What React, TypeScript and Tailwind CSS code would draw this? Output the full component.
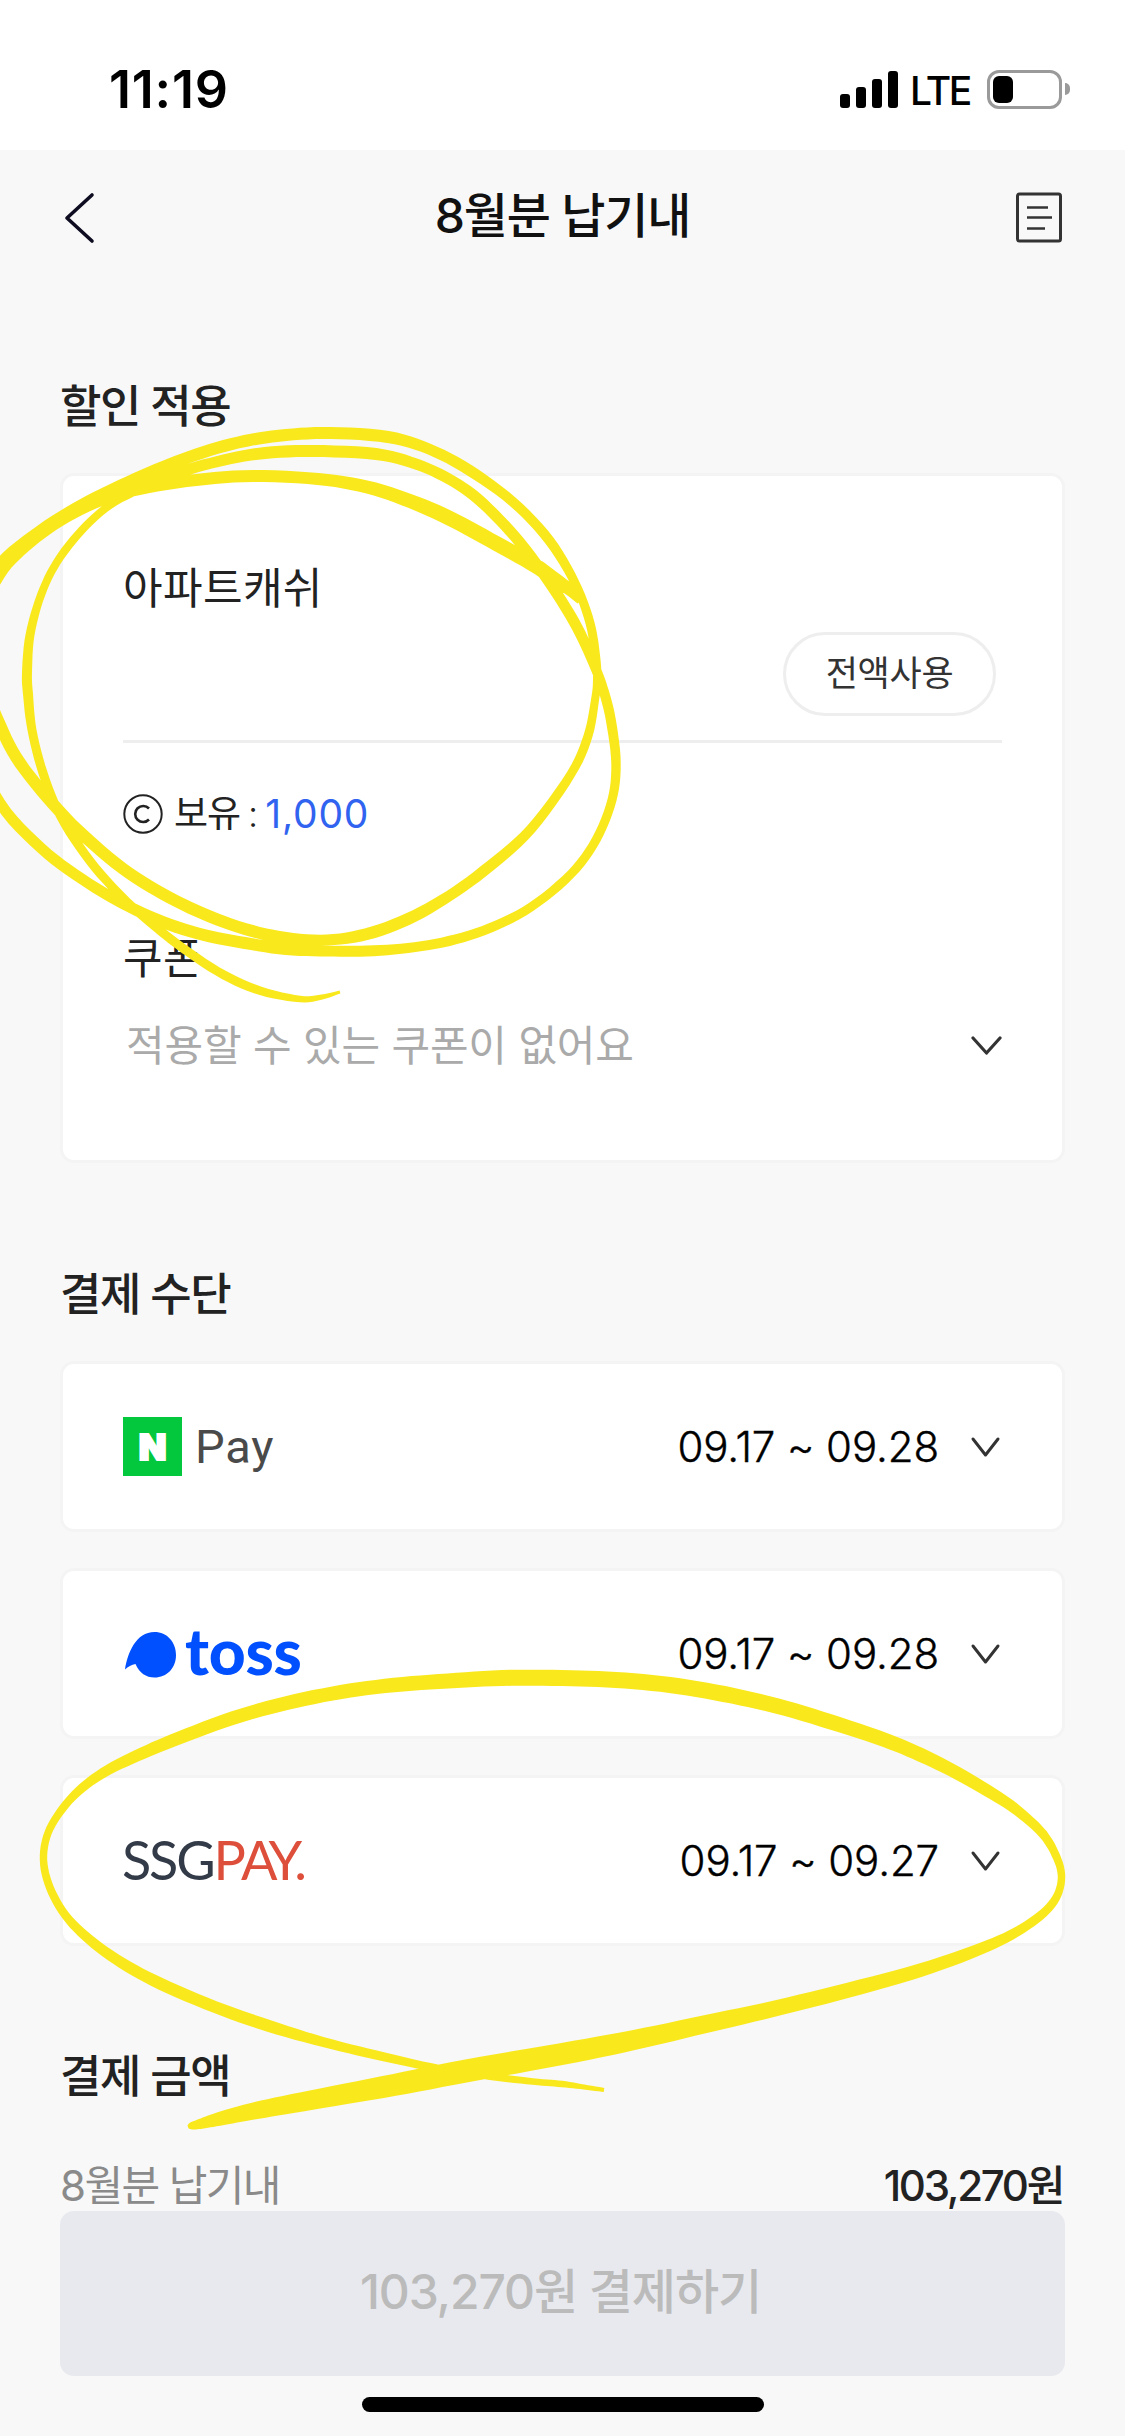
import type { ReactNode } from "react";

type Sample = [x: number, y: number, width: number];

/* Highlighter strokes: centre line samples with the pen width at each one. */
const CASH_LOOP: Sample[] = [
  [581, 600, 10], [570, 590, 12], [553, 578, 14], [531, 563, 15], [490, 540, 15], [449, 518, 15], [410, 501, 14], [367, 487, 13],
  [318, 479, 12], [253, 476, 12], [196, 480, 12], [139, 489, 12], [100, 501, 11], [60, 521, 11], [25, 547, 11],
  [0, 575, 10], [-20, 620, 10], [-20, 670, 11], [0, 725, 12], [20, 763, 12], [53, 804, 12], [82, 834, 12],
  [122, 868, 12], [163, 894, 12], [204, 914, 12], [245, 929, 12], [286, 938, 12], [327, 940, 11], [367, 934, 12],
  [408, 919, 12], [449, 896, 11], [490, 866, 11], [531, 829, 10], [571, 774, 9], [588, 736, 9], [595, 700, 8],
  [597, 680, 8], [596, 660, 9], [590, 623, 9], [575, 583, 9], [549, 540, 10], [513, 502, 10], [469, 470, 11],
  [429, 449, 11], [388, 437, 12], [331, 433, 12], [286, 435, 12], [245, 441, 12], [204, 452, 12], [163, 467, 12],
  [122, 485, 12], [82, 505, 12], [41, 530, 11], [0, 564, 11], [-26, 610, 10], [-38, 670, 10], [-28, 740, 10],
  [0, 803, 11], [41, 848, 11], [82, 879, 11], [122, 903, 11], [163, 922, 12], [204, 935, 12], [245, 943, 12],
  [286, 949, 12], [327, 951, 11], [367, 951, 11], [408, 948, 10], [449, 941, 10], [490, 928, 9.5], [531, 907, 9],
  [571, 874, 9], [596, 840, 9], [612, 800, 9], [616, 763, 9.5], [611, 721, 10], [604, 692, 10], [595, 667, 10],
  [580, 633, 11], [561, 600, 11], [535, 562, 11], [510, 531, 11], [478, 499, 11], [449, 479, 11], [416, 464, 11],
  [376, 454, 12], [314, 451, 12], [265, 453, 12], [224, 460, 11], [184, 471, 11], [143, 487, 10], [110, 505, 8],
  [82, 530, 8], [57, 562, 8], [41, 595, 8], [30, 635, 9], [27, 673, 10], [28, 694, 10], [32, 730, 9], [43, 773, 9],
  [61, 817, 9], [90, 861, 9], [122, 897, 9], [151, 923, 9], [184, 949, 9], [224, 975, 9], [261, 991, 8.5],
  [300, 999, 6.5], [322, 997, 5], [340, 992, 3],
];

const SSGPAY_LOOP: Sample[] = [
  [188, 2127, 3], [191, 2126, 7], [200, 2124, 10], [215, 2120, 13], [240, 2114, 16], [269, 2108, 18], [323, 2098, 20], [394, 2085, 22],
  [466, 2071, 23], [562, 2054, 22], [634, 2040, 20], [706, 2024, 18], [777, 2008, 16], [849, 1990, 15],
  [921, 1970, 13.5], [975, 1951, 12], [1011, 1935, 10], [1040, 1916, 9], [1056, 1898, 8], [1061.5, 1878, 7.5],
  [1057, 1858, 8], [1043, 1834, 9], [1018, 1811, 10.5], [993, 1794, 12], [957, 1773, 13], [921, 1755, 14],
  [885, 1740, 14.5], [831, 1722, 15], [777, 1706, 15.5], [724, 1694, 16], [670, 1685, 16], [616, 1680, 16],
  [562, 1678, 16], [502, 1678, 16], [448, 1681, 15], [394, 1685, 14.5], [341, 1692, 14], [287, 1703, 14],
  [233, 1718, 13.5], [179, 1738, 13], [143, 1753, 12], [108, 1770, 10.5], [82, 1788, 9], [63, 1808, 8],
  [48, 1833, 7.5], [43.5, 1860, 7.5], [50, 1888, 8], [66, 1916, 8.5], [90, 1940, 10], [122, 1963, 11],
  [161, 1984, 12], [215, 2007, 12], [269, 2026, 12], [323, 2042, 10], [376, 2055, 9], [430, 2067, 8], [466, 2073, 7],
  [502, 2078, 7], [538, 2082, 6.5], [562, 2084, 6.5], [584, 2087, 5], [604, 2090, 4],
];

/* Catmull-Rom interpolation, offset to both sides by half of the pen width. */
function brushPath(samples: Sample[]): string {
  const fine: Sample[] = [];
  for (let i = 0; i < samples.length - 1; i++) {
    const a = samples[Math.max(0, i - 1)];
    const b = samples[i];
    const c = samples[i + 1];
    const d = samples[Math.min(samples.length - 1, i + 2)];
    for (let s = 0; s < 6; s++) {
      const t = s / 6;
      fine.push(
        [0, 1, 2].map(
          (k) =>
            0.5 *
            (2 * b[k] +
              (c[k] - a[k]) * t +
              (2 * a[k] - 5 * b[k] + 4 * c[k] - d[k]) * t * t +
              (3 * b[k] - a[k] - 3 * c[k] + d[k]) * t * t * t),
        ) as Sample,
      );
    }
  }
  fine.push(samples[samples.length - 1]);
  const left: string[] = [];
  const right: string[] = [];
  fine.forEach(([x, y, w], i) => {
    const p = fine[Math.max(0, i - 1)];
    const n = fine[Math.min(fine.length - 1, i + 1)];
    const dx = n[0] - p[0];
    const dy = n[1] - p[1];
    const len = Math.hypot(dx, dy) || 1;
    const ox = (-dy / len) * (w / 2);
    const oy = (dx / len) * (w / 2);
    left.push(`${(x + ox).toFixed(1)} ${(y + oy).toFixed(1)}`);
    right.unshift(`${(x - ox).toFixed(1)} ${(y - oy).toFixed(1)}`);
  });
  return `M${left.join("L")}L${right.join("L")}Z`;
}

function StatusBar() {
  return (
    <div className="flex h-[150px] items-center justify-between bg-white pt-[28px] pr-[55px] pl-[109px] text-black">
      <span className="pt-[2px] text-[52px] leading-none font-semibold tracking-[0.8px]">11:19</span>
      <div className="flex items-center">
        <div className="flex h-[38px] items-end gap-[6px]">
          <i className="h-[14px] w-[10px] rounded-[3px] bg-black" />
          <i className="h-[21px] w-[10px] rounded-[3px] bg-black" />
          <i className="h-[29px] w-[10px] rounded-[3px] bg-black" />
          <i className="h-[37px] w-[10px] rounded-[3px] bg-black" />
        </div>
        <span className="mr-[15px] ml-[12px] w-[62px] pt-[2px] text-[39px] leading-none font-medium tracking-[-2.600px] whitespace-nowrap">LTE</span>
        <div className="h-[39px] w-[75px] rounded-[12px] border-[3px] border-[#9a9a9a] p-[3px]">
          <div className="h-full w-[20px] rounded-[6px] bg-black" />
        </div>
        <div className="ml-[3px] h-[12px] w-[5px] rounded-r-full bg-[#9a9a9a]" />
      </div>
    </div>
  );
}

function Header() {
  return (
    <header className="flex h-[136px] items-center justify-between pr-[62px] pl-[62px]">
      <svg className="h-[52px] w-[48px]" viewBox="0 0 48 52" fill="none" stroke="#0d0c20" strokeWidth="3.6" strokeLinecap="round" strokeLinejoin="round">
        <path d="M30 3 5 26l25 23" />
      </svg>
      <h1 className="pb-[5px] text-[48px] leading-[60px] font-medium tracking-[-1.2px] text-[#111]">8월분 납기내</h1>
      <svg className="h-[52px] w-[48px]" viewBox="0 0 48 52" fill="none" stroke="#333" strokeWidth="3">
        <rect x="2.5" y="2" width="43" height="47" rx="2" />
        <path d="M12 15.500h21M12 25.500h25M12 36.500h18" strokeWidth="2.600" />
      </svg>
    </header>
  );
}

function SectionTitle({ children, className }: { children: ReactNode; className: string }) {
  return (
    <h2 className={`pt-[3px] text-[45px] leading-[57px] font-medium tracking-[-1.500px] text-[#222] ${className}`}>{children}</h2>
  );
}

function NaverPayLogo() {
  return (
    <div className="flex items-center">
      <div className="flex size-[59px] items-center justify-center bg-[#03c73c]">
        <span className="text-[36px] leading-none font-black text-white [-webkit-text-stroke:2px_white]">N</span>
      </div>
      <span className="ml-[13px] font-[Roboto] text-[47px] leading-[60px] tracking-[0.800px] text-[#4a4a4a]">Pay</span>
    </div>
  );
}

function TossLogo() {
  return (
    <div className="flex items-center">
      <svg className="mt-[2px] ml-[2px] h-[46px] w-[52px]" viewBox="0 0 52 46" fill="#0050ff">
        <path d="M29.500 0C42 0 51 10 51 23S42 45.500 29.500 45.500c-8.500 0-15-4.500-19-13.500C6.500 33 3 34.500 0 37.500 2.500 21 11 0 29.500 0Z" />
      </svg>
      <span className="ml-[8px] pb-[5px] font-[Lato] text-[64px] leading-[60px] font-black tracking-[-0.200px] text-[#0050ff]">toss</span>
    </div>
  );
}

function SsgPayLogo() {
  return (
    <div className="flex items-center pb-[2px] font-[Lato] text-[54px] leading-[60px] whitespace-nowrap">
      <span className="-ml-px tracking-[-2.200px] text-[#333b48]">SSG</span>
      <span className="text-[#dd4f3b]">
        <span className="tracking-[-5px]">P</span>
        <span className="tracking-[-9px]">A</span>
        <span className="tracking-[-8px]">Y</span>.
      </span>
    </div>
  );
}

function PaymentCard({ logo, period }: { logo: ReactNode; period: string }) {
  return (
    <div className="flex h-[171px] items-center justify-between rounded-[14px] border-[3px] border-[#f4f4f4] bg-white pr-[60px] pl-[60px]">
      {logo}
      <div className="flex items-center">
        <span className="text-[42px] leading-[60px] font-light tracking-[-0.100px] text-black [-webkit-text-stroke:0.4px_black]">{period}</span>
        <svg className="ml-[31px] h-[22px] w-[32px]" viewBox="0 0 32 22" fill="none" stroke="#333" strokeWidth="3" strokeLinecap="round" strokeLinejoin="round">
          <path d="M3 3l12.500 16L28 3" />
        </svg>
      </div>
    </div>
  );
}

export default function App() {
  return (
    <div className="relative h-[2436px] w-[1125px] overflow-hidden bg-[#f8f8f8] font-['Inter','Noto_Sans_CJK_KR',sans-serif]">
      <StatusBar />
      <Header />

      <main className="px-[60px]">
        <SectionTitle className="mt-[89px]">할인 적용</SectionTitle>
        <section className="mt-[38px] flex h-[690px] flex-col rounded-[14px] border-[3px] border-[#f4f4f4] bg-white px-[60px] pt-[82px]">
          <div className="text-[43px] leading-[60px] tracking-[0.400px] text-[#222]">아파트캐쉬</div>
          <button className="mt-[14px] mr-[6px] h-[84px] w-[213px] self-end rounded-full border-[3px] border-[#eee] pb-[2px] text-[35px] leading-[60px] tracking-[-0.300px] text-[#333]">
            전액사용
          </button>
          <hr className="mt-[24px] h-[3px] border-0 bg-[#eee]" />
          <div className="mt-[41px] flex h-[60px] items-center">
            <svg className="size-[40px]" viewBox="0 0 40 40" fill="none" stroke="#222">
              <circle cx="20" cy="20" r="18.700" strokeWidth="2" />
              <path d="M26 14.500a8 8 0 1 0 0 11" strokeWidth="2.600" />
            </svg>
            <span className="ml-[11px] text-[37px] leading-[60px] tracking-[-1px] text-[#222]">보유</span>
            <span className="ml-[8px] text-[36px] leading-[60px] font-light text-[#222]">:</span>
            <span className="ml-[7px] text-[39px] leading-[60px] tracking-[0.800px] text-[#2f63f0]">1,000</span>
          </div>
          <div className="mt-[84px] text-[43px] leading-[60px] tracking-[0.400px] text-[#222]">쿠폰</div>
          <div className="mt-[28px] flex h-[60px] items-center justify-between">
            <span className="pl-[3px] text-[42px] leading-[60px] tracking-[-0.200px] text-[#aaa]">적용할 수 있는 쿠폰이 없어요</span>
            <svg className="h-[24px] w-[32px]" viewBox="0 0 32 24" fill="none" stroke="#333" strokeWidth="3.200" strokeLinecap="round" strokeLinejoin="round">
              <path d="M3 4l13.500 15L30 4" />
            </svg>
          </div>
        </section>

        <SectionTitle className="mt-[100px]">결제 수단</SectionTitle>
        <div className="mt-[38px] flex flex-col gap-[36px]">
          <PaymentCard logo={<NaverPayLogo />} period="09.17 ~ 09.28" />
          <PaymentCard logo={<TossLogo />} period="09.17 ~ 09.28" />
          <PaymentCard logo={<SsgPayLogo />} period="09.17 ~ 09.27" />
        </div>

        <SectionTitle className="mt-[99px]">결제 금액</SectionTitle>
        <div className="mt-[55px] flex h-[51px] items-center justify-between pr-[2px] text-[42px] leading-[51px]">
          <span className="tracking-[-1.600px] text-[#8a8a8a]">8월분 납기내</span>
          <span className="font-medium tracking-[-2.300px] text-[#222]">103,270원</span>
        </div>
        <button className="block h-[165px] w-full rounded-[14px] bg-[#e8e9ee] pr-[4px] pb-[4px] text-[48px] leading-[60px] font-medium tracking-[-1.100px] text-[#bbb]">
          103,270원 결제하기
        </button>
        <div className="mx-auto mt-[21px] h-[15px] w-[402px] rounded-full bg-black" />
      </main>

      <svg className="pointer-events-none absolute inset-0" width="1125" height="2436" viewBox="0 0 1125 2436" fill="#f9e81c">
        <path d={brushPath(CASH_LOOP)} />
        <path d={brushPath(SSGPAY_LOOP)} />
      </svg>
    </div>
  );
}
